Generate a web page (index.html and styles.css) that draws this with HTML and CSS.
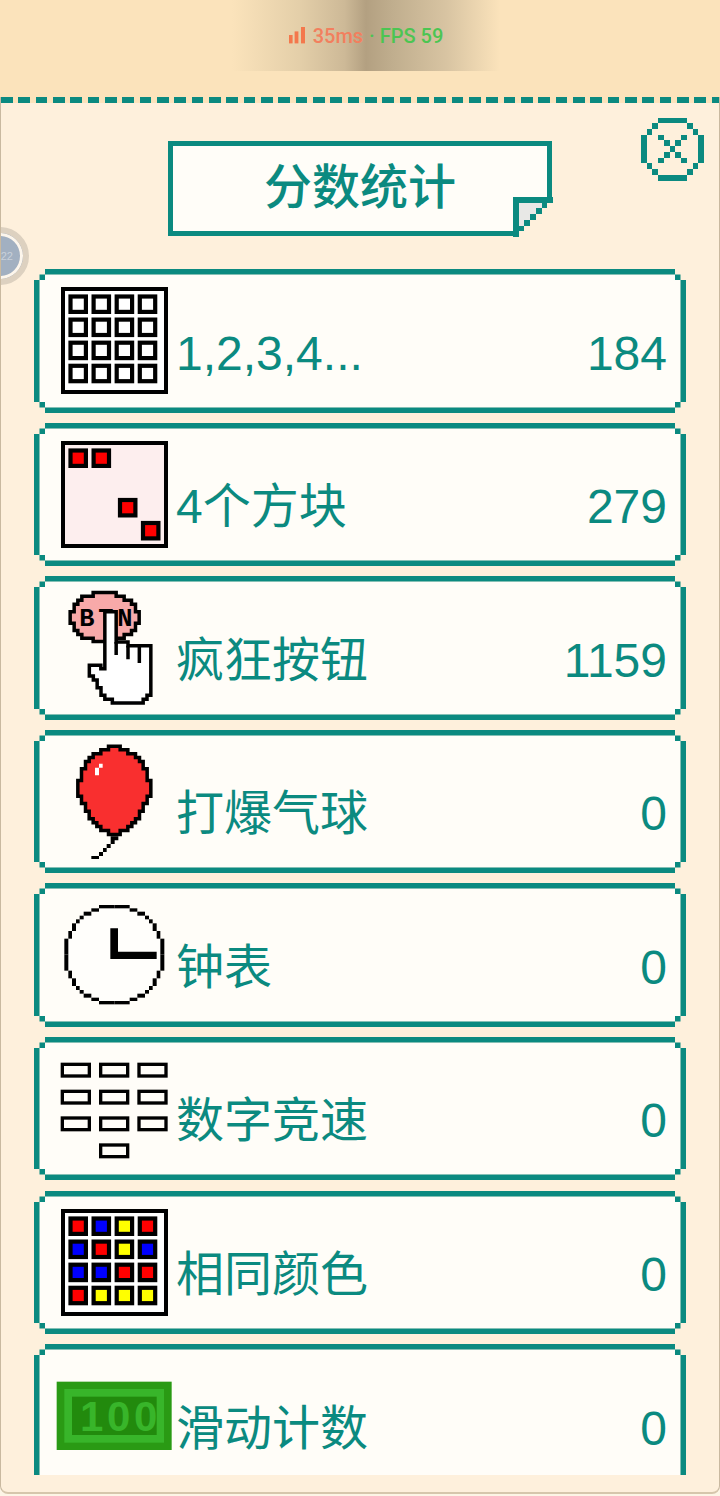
FILE: index.html
```html
<!DOCTYPE html>
<html>
  <head>
    <meta charset="utf-8" />
    <title>分数统计</title>
    <link rel="stylesheet" href="styles.css">
  </head>
  <body>
    <svg class="defs" width="0" height="0">
      <defs>
        <rect id="cell" width="15.4" height="15.4" stroke="#000" stroke-width="4.2" />
        <g id="clock-quarter">
          <rect x="207" y="60" width="46" height="10" />
          <rect x="184" y="70" width="23" height="10" />
          <rect x="161" y="80" width="23" height="12" />
          <rect x="149" y="92" width="12" height="11" />
          <rect x="138" y="103" width="11" height="12" />
          <rect x="126" y="115" width="12" height="23" />
          <rect x="115" y="138" width="11" height="23" />
          <rect x="103" y="161" width="12" height="48" />
        </g>
      </defs>
    </svg>

    <header class="status-bar">
      <div class="net-pill">
        <svg class="net-bars" width="16" height="17" viewBox="0 0 16 17">
          <rect x="0" y="8" width="3.6" height="8.4" />
          <rect x="5.6" y="4.4" width="3.8" height="12" />
          <rect x="12" y="0" width="4" height="16.4" />
        </svg>
        <span class="net-ms">35ms</span>
        <span class="net-fps">· FPS 59</span>
      </div>
    </header>

    <main class="panel">
      <div class="dashes"></div>

      <div class="float-ball"><span>22</span></div>

      <svg class="close-btn" width="63" height="64" viewBox="0 0 11 11" shape-rendering="crispEdges">
        <path d="M3 0h5v1H3zM2 1h1v1H2zM8 1h1v1H8zM1 2h1v1H1zM9 2h1v1H9zM0 3h1v5H0zM10 3h1v5H10zM1 8h1v1H1zM9 8h1v1H9zM2 9h1v1H2zM8 9h1v1H8zM3 10h5v1H3z" />
        <path d="M3 3h1v1H3zM7 3h1v1H7zM4 4h1v1H4zM6 4h1v1H6zM5 5h1v1H5zM4 6h1v1H4zM6 6h1v1H6zM3 7h1v1H3zM7 7h1v1H7z" />
      </svg>

      <h1 class="title">
        分数统计
        <svg class="title-fold" width="40" height="40" viewBox="0 0 7 7" shape-rendering="crispEdges">
          <path class="fold-bg" d="M1 1h6v6H1z" />
          <path class="fold-paper" d="M1 1h4v1H4v1H3v1H2v1H1z" />
          <path class="fold-line" d="M0 0h7v1H0zM0 0h1v7H0zM5 1h1v1H5zM4 2h1v1H4zM3 3h1v1H3zM2 4h1v1H2zM1 5h1v1H1z" />
        </svg>
      </h1>

      <div class="score-list">
        <div class="score-row">
          <svg class="game-icon" viewBox="0 0 108 108">
            <rect class="frame" x="2" y="2" width="103" height="103" fill="#fff" />
            <g fill="#fff">
              <use href="#cell" x="9.5" y="9.5" /><use href="#cell" x="32.6" y="9.5" /><use href="#cell" x="55.7" y="9.5" /><use href="#cell" x="78.8" y="9.5" />
              <use href="#cell" x="9.5" y="32.6" /><use href="#cell" x="32.6" y="32.6" /><use href="#cell" x="55.7" y="32.6" /><use href="#cell" x="78.8" y="32.6" />
              <use href="#cell" x="9.5" y="55.7" /><use href="#cell" x="32.6" y="55.7" /><use href="#cell" x="55.7" y="55.7" /><use href="#cell" x="78.8" y="55.7" />
              <use href="#cell" x="9.5" y="78.8" /><use href="#cell" x="32.6" y="78.8" /><use href="#cell" x="55.7" y="78.8" /><use href="#cell" x="78.8" y="78.8" />
            </g>
          </svg>
          <span class="score-name">1,2,3,4...</span>
          <span class="score-value">184</span>
        </div>

        <div class="score-row">
          <svg class="game-icon" viewBox="0 0 108 108">
            <rect class="frame" x="2" y="2" width="103" height="103" fill="#fdeeee" />
            <g fill="#f00">
              <use href="#cell" x="9.5" y="9.5" /><use href="#cell" x="32.6" y="9.5" />
              <use href="#cell" x="59" y="59" /><use href="#cell" x="82" y="82" />
            </g>
          </svg>
          <span class="score-name">4个方块</span>
          <span class="score-value">279</span>
        </div>

        <div class="score-row">
          <svg class="game-icon" viewBox="93 57 324 324">
            <path class="pixel-line" fill="#f8a9a9" d="M189.5 52.5H258.5V63.5H282.5V75.5H304.5V87.5H316.5V110.5H327.5V144.5H316.5V166.5H304.5V178.5H282.5V189.5H258.5V199.5H189.5V189.5H155.5V178.5H143.5V166.5H132.5V144.5H120.5V110.5H132.5V87.5H143.5V75.5H155.5V63.5H189.5Z" />
            <text class="btn-text" x="148" y="154">BTN</text>
            <path class="pixel-line" fill="#fff" d="M224.5 110H258.5V201H294V212H362.5V361H351V372.5H339.5V384H247V372.5H224.5V361H213V338H201.5V315H190V303H178V270.5H212.5V281.5H224.5Z" />
            <path class="pixel-line" fill="none" d="M258.5 201V240M294 212V253M328 212V264" />
          </svg>
          <span class="score-name">疯狂按钮</span>
          <span class="score-value">1159</span>
        </div>

        <div class="score-row">
          <svg class="game-icon" viewBox="93 518 324 324">
            <path class="pixel-line" fill="#f92f2f" d="M253 512.5H235.5V523.5H212.5V535.5H189.5V546.5H177.5V558.5H166.5V580.5H154.5V615.5H143.5V662.5H154.5V684.5H166.5V707.5H177.5V730.5H189.5V742.5H200.5V753.5H212.5V765.5H235.5V777.5H270.5V765.5H293.5V753.5H305.5V742.5H316.5V730.5H328.5V707.5H339.5V684.5H351.5V662.5H362.5V615.5H351.5V580.5H339.5V558.5H328.5V546.5H316.5V535.5H293.5V523.5H270.5V512.5Z" />
            <path fill="#fff" d="M195 577H207V600H195ZM207 565H218V577H207Z" />
            <path d="M242 783H265V795H254V806H242ZM230 806H242V818H230ZM219 818H230V830H219ZM207 830H219V842H207ZM184 842H207V851H184Z" />
          </svg>
          <span class="score-name">打爆气球</span>
          <span class="score-value">0</span>
        </div>

        <div class="score-row">
          <svg class="game-icon" viewBox="93 48 324 324">
            <circle cx="253" cy="209" r="145" fill="#fffefb" />
            <use href="#clock-quarter" />
            <use href="#clock-quarter" transform="translate(506 0) scale(-1 1)" />
            <use href="#clock-quarter" transform="translate(0 418) scale(1 -1)" />
            <use href="#clock-quarter" transform="translate(506 418) scale(-1 -1)" />
            <path d="M241 130H264V200H380V222H241Z" />
          </svg>
          <span class="score-name">钟表</span>
          <span class="score-value">0</span>
        </div>

        <div class="score-row">
          <svg class="game-icon" viewBox="93 510 324 324">
            <g class="keypad">
              <rect x="97" y="538" width="81" height="35" /><rect x="212" y="538" width="81" height="35" /><rect x="327" y="538" width="81" height="35" />
              <rect x="97" y="619" width="81" height="35" /><rect x="212" y="619" width="81" height="35" /><rect x="327" y="619" width="81" height="35" />
              <rect x="97" y="699" width="81" height="35" /><rect x="212" y="699" width="81" height="35" /><rect x="327" y="699" width="81" height="35" />
              <rect x="212" y="780" width="81" height="35" />
            </g>
          </svg>
          <span class="score-name">数字竞速</span>
          <span class="score-value">0</span>
        </div>

        <div class="score-row">
          <svg class="game-icon" viewBox="0 0 108 108">
            <rect class="frame" x="2" y="2" width="103" height="103" fill="#fff" />
            <use href="#cell" x="9.5" y="9.5" fill="#f00" /><use href="#cell" x="32.6" y="9.5" fill="#00f" /><use href="#cell" x="55.7" y="9.5" fill="#ff0" /><use href="#cell" x="78.8" y="9.5" fill="#f00" />
            <use href="#cell" x="9.5" y="32.6" fill="#00f" /><use href="#cell" x="32.6" y="32.6" fill="#f00" /><use href="#cell" x="55.7" y="32.6" fill="#ff0" /><use href="#cell" x="78.8" y="32.6" fill="#00f" />
            <use href="#cell" x="9.5" y="55.7" fill="#00f" /><use href="#cell" x="32.6" y="55.7" fill="#00f" /><use href="#cell" x="55.7" y="55.7" fill="#f00" /><use href="#cell" x="78.8" y="55.7" fill="#f00" />
            <use href="#cell" x="9.5" y="78.8" fill="#f00" /><use href="#cell" x="32.6" y="78.8" fill="#ff0" /><use href="#cell" x="55.7" y="78.8" fill="#ff0" /><use href="#cell" x="78.8" y="78.8" fill="#ff0" />
          </svg>
          <span class="score-name">相同颜色</span>
          <span class="score-value">0</span>
        </div>

        <div class="score-row">
          <svg class="game-icon" viewBox="93 501 324 324">
            <rect x="80" y="560" width="345" height="205" fill="#2a9a14" />
            <rect x="103" y="582" width="299" height="161" fill="#38b52a" />
            <rect x="126" y="605" width="254" height="115" fill="#228a0d" />
            <text class="money-text" x="150" y="708">100</text>
          </svg>
          <span class="score-name">滑动计数</span>
          <span class="score-value">0</span>
        </div>
      </div>
    </main>
  </body>
</html>
```

FILE: styles.css
```css
* {
  box-sizing: border-box;
}
html,
body {
  margin: 0;
  height: 1496px;
  overflow: hidden;
}
body {
  position: relative;
  background-color: #fdf5e6;
  font-family: "Liberation Sans", "Noto Sans CJK SC", sans-serif;
}
.defs {
  display: block;
  height: 0;
}

/* top strip */
.status-bar {
  height: 97px;
  background-color: #fbe3bb;
  display: flex;
  justify-content: center;
}
.net-pill {
  width: 268px;
  height: 71px;
  margin-left: 12px;
  display: flex;
  align-items: center;
  justify-content: center;
  gap: 8px;
  font-family: Roboto, sans-serif;
  font-size: 20px;
  font-weight: 500;
  background: linear-gradient(90deg, #fbe3bb 0%, #e4cfa9 25%, #cdb997 42%, #b3a081 50%, #c0ae8e 60%, #d8c4a2 80%, #fbe3bb 100%);
}
.net-bars {
  fill: #f4784c;
  margin-top: -1px;
}
.net-ms {
  color: #f27f5e;
}
.net-fps {
  color: #4cc552;
  margin-left: -2px;
}

/* panel */
.panel {
  position: relative;
  height: 1397px;
  background-color: #fef0dc;
  border-left: 1px solid #c9b9a0;
  border-right: 1px solid #c9b9a0;
  border-bottom: 2px solid #d6c6ac;
  border-radius: 0 0 8px 8px;
  overflow: hidden;
}
.dashes {
  height: 5.5px;
  background: repeating-linear-gradient(90deg, #0b8a80 0, #0b8a80 11.7px, transparent 11.7px, transparent 17.33px);
  background-color: #fbe3bb;
}
.float-ball {
  position: absolute;
  left: -30px;
  top: 130px;
  width: 58px;
  height: 58px;
  border: 6px solid #ddd1c0;
  border-radius: 50%;
  background-color: #a2b0c1;
  box-shadow: inset 0 0 0 3px #fdf6ec;
  display: flex;
  align-items: center;
  justify-content: flex-end;
  padding-right: 10px;
  color: #c9d1da;
  font-size: 11px;
}
.close-btn {
  position: absolute;
  right: 15px;
  top: 20px;
  fill: #0b8a80;
}

/* title card */
.title {
  position: relative;
  width: 384px;
  height: 95px;
  margin: 38.5px auto 0;
  border: 5.5px solid #0b8a80;
  background-color: #fffdf8;
  color: #0b8a80;
  font-size: 48px;
  font-weight: 500;
  line-height: 84px;
  text-align: center;
}
.title-fold {
  position: absolute;
  right: -5.5px;
  bottom: -5.5px;
}
.fold-bg {
  fill: #fef0dc;
}
.fold-paper {
  fill: #e8e8e6;
}
.fold-line {
  fill: #0b8a80;
}

/* list */
.score-list {
  height: 1206px;
  margin-top: 33px;
  padding: 0 33px;
  overflow: hidden;
  display: flex;
  flex-direction: column;
  gap: 10.1px;
}
.score-row {
  flex: none;
  height: 143.5px;
  display: flex;
  align-items: flex-end;
  padding: 7px 8px 18px 16px;
  border: 11px solid transparent;
  border-image: url("data:image/svg+xml,%3Csvg xmlns='http://www.w3.org/2000/svg' width='34' height='34'%3E%3Cpath fill='%23fffdf8' d='M11 5.5H23V11H28.5V23H23V28.5H11V23H5.5V11H11Z'/%3E%3Cpath fill='%230b8a80' d='M11 0H23V5.5H11ZM11 28.5H23V34H11ZM0 11H5.5V23H0ZM28.5 11H34V23H28.5ZM5.5 5.5H11V11H5.5ZM23 5.5H28.5V11H23ZM5.5 23H11V28.5H5.5ZM23 23H28.5V28.5H23Z'/%3E%3C/svg%3E") 11 fill;
  color: #0b8a80;
  font-size: 48px;
  line-height: 60px;
}
.game-icon {
  flex: none;
  align-self: flex-start;
  width: 108px;
  height: 108px;
  overflow: visible;
}
.score-name {
  margin-left: 7px;
  flex: 1;
}
.score-value {
  flex: none;
}

/* icon parts */
.frame {
  stroke: #000;
  stroke-width: 4;
}
.pixel-line {
  stroke: #000;
  stroke-width: 10.5;
}
.keypad {
  fill: #fffdf8;
  stroke: #000;
  stroke-width: 10;
}
.btn-text {
  font-family: "Liberation Mono", monospace;
  font-size: 76px;
  font-weight: bold;
  letter-spacing: 11.4px;
}
.money-text {
  font-family: "Liberation Sans", sans-serif;
  font-size: 126px;
  font-weight: bold;
  letter-spacing: 11px;
  fill: #38b52a;
}
```
